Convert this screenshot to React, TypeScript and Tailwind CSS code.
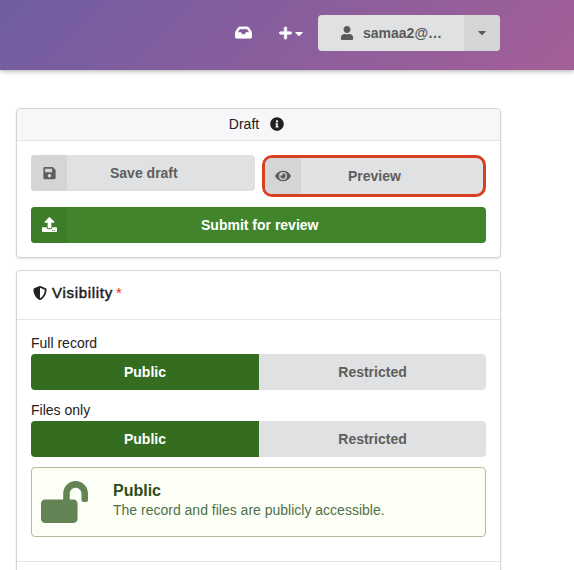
import React from "react";
import {
  FaInbox,
  FaPlus,
  FaCaretDown,
  FaUser,
  FaSave,
  FaEye,
  FaUpload,
  FaInfoCircle,
  FaShieldAlt,
  FaLockOpen,
} from "react-icons/fa";

function TopBar() {
  return (
    <header className="flex h-[70px] items-start bg-[linear-gradient(135deg,#6f5da1,#a45f98)] pt-[15px] pl-[235px] text-white shadow-[0_1px_5px_rgba(0,0,0,0.35)]">
      <div className="flex h-9 w-11 items-center">
        <FaInbox className="mb-[2px] h-[15px] w-[17px]" strokeWidth={24} stroke="currentColor" />
      </div>
      <div className="flex h-9 w-[39px] items-center">
        <FaPlus className="h-[14px] w-[13px]" strokeWidth={20} stroke="currentColor" />
        <FaCaretDown className="mt-[1px] ml-[3px] h-[13px] w-[8px]" />
      </div>
      <div className="flex h-9 w-[182px] overflow-hidden rounded bg-[#e0e1e2] text-[#5a5a5a]">
        <button className="flex w-[146px] items-center pl-[22px] text-sm font-bold">
          <FaUser className="mr-[9px] mb-px h-[14px] w-[14px]" />
          samaa2@…
        </button>
        <button className="flex w-9 items-center justify-center bg-[#d4d5d6]">
          <FaCaretDown className="mb-px h-[13px] w-[8px]" />
        </button>
      </div>
    </header>
  );
}

function Toggle({ label }: { label: string }) {
  return (
    <div>
      <div className="h-[22px] text-sm leading-[22px] text-[#212121]">{label}</div>
      <div className="flex h-9 overflow-hidden rounded text-sm font-bold">
        <button className="w-[228px] bg-[#356d20] text-white">Public</button>
        <button className="flex-1 bg-[#e0e1e2] text-[#5e5e5e]">Restricted</button>
      </div>
    </div>
  );
}

function DraftCard() {
  return (
    <section className="h-[150px] w-[485px] rounded border border-[#d4d4d5] bg-white shadow-[0_1px_2px_rgba(34,36,38,0.12)]">
      <div className="flex h-8 items-center justify-center rounded-t border-b border-[#e2e3e4] bg-[#f7f7fa] pr-1 pb-[2px] text-sm text-[#212121]">
        <span>Draft</span>
        <FaInfoCircle className="ml-[11px] size-[14px]" />
      </div>
      <div className="px-[14px] pt-[14px]">
        <div className="flex items-start gap-[7px]">
          <button className="flex h-9 w-[224px] overflow-hidden rounded bg-[#e0e1e2] text-sm font-bold text-[#5e5e5e]">
            <span className="flex h-full w-9 items-center justify-center bg-[#d4d5d6]">
              <FaSave className="h-[14px] w-[13px]" />
            </span>
            <span className="flex-1 pl-[43px] text-left leading-9">Save draft</span>
          </button>
          <button className="flex h-[42px] w-[224px] overflow-hidden rounded-[10px] border-[3px] border-[#d9411e] bg-[#e0e1e2] text-sm font-bold text-[#5e5e5e]">
            <span className="flex h-full w-9 items-center justify-center bg-[#d4d5d6]">
              <FaEye className="h-[14px] w-4" />
            </span>
            <span className="flex-1 pl-[47px] text-left leading-9">Preview</span>
          </button>
        </div>
        <button className="mt-[10px] flex h-9 w-full overflow-hidden rounded bg-[#41842c] text-sm font-bold text-white">
          <span className="flex h-full w-9 items-center justify-center bg-[#3d7c29] pb-px">
            <FaUpload className="size-[15px]" />
          </span>
          <span className="flex-1 pl-[134px] text-left leading-9">Submit for review</span>
        </button>
      </div>
    </section>
  );
}

function VisibilityCard() {
  return (
    <section className="mt-3 w-[485px] rounded border border-[#d4d4d5] bg-white shadow-[0_1px_2px_rgba(34,36,38,0.12)]">
      <div className="flex h-[49px] items-center border-b border-[#e4e5e6] pl-4 text-[#212121]">
        <FaShieldAlt className="mt-[-4px] size-[14px]" />
        <h2 className="mt-[-3px] ml-[5px] text-[15px] font-normal tracking-[0.7px] [-webkit-text-stroke:0.5px_#212121]">
          Visibility
        </h2>
        <span className="mt-[-4px] ml-[3px] text-[15px] text-[#db2828]">*</span>
      </div>
      <div className="flex flex-col gap-[9px] px-[14px] pt-3">
        <Toggle label="Full record" />
        <Toggle label="Files only" />
        <div className="mt-px flex h-[70px] items-center rounded border border-[#b1bc9f] bg-[#fcfff5] pl-[9px]">
          <FaLockOpen className="h-[42px] w-[47px] text-[#638354]" />
          <div className="mt-[-4px] ml-[25px]">
            <div className="pt-px text-base leading-5 font-bold text-[#2b4d1c]">Public</div>
            <p className="-mt-px text-sm leading-5 text-[#50704a]">
              The record and files are publicly accessible.
            </p>
          </div>
        </div>
      </div>
      <div className="mt-6 h-12 border-t border-[#e4e5e6]" />
    </section>
  );
}

export default function App() {
  return (
    <div className="h-[570px] w-[574px] overflow-hidden bg-white font-['Liberation_Sans',Arial,sans-serif]">
      <TopBar />
      <main className="pt-[38px] pl-4">
        <DraftCard />
        <VisibilityCard />
      </main>
    </div>
  );
}
